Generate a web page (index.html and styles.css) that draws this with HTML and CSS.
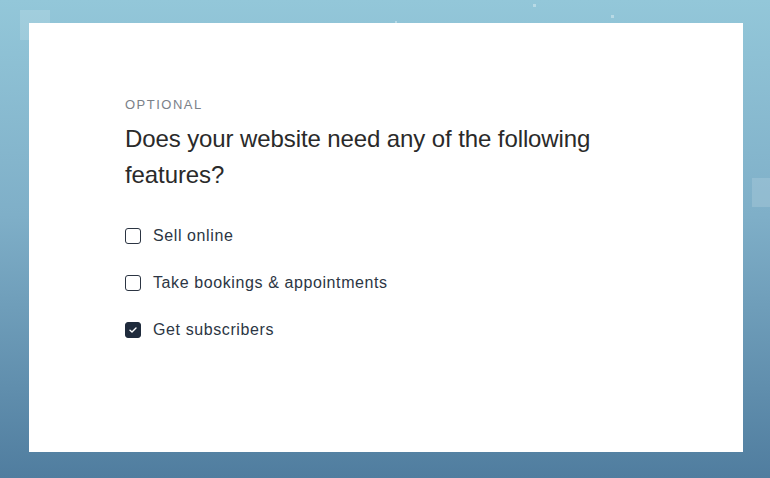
FILE: index.html
```html
<!DOCTYPE html>
<html lang="en">
<head>
  <meta charset="UTF-8" />
  <meta name="viewport" content="width=device-width, initial-scale=1.0"/>
  <title>Website features</title>
  <link rel="stylesheet" href="styles.css">
</head>
<body>
  <div class="backdrop">
    <span class="tile tile-left"></span>
    <span class="tile tile-right"></span>
    <span class="dot dot-a"></span>
    <span class="dot dot-b"></span>
    <span class="dot dot-c"></span>

    <div class="card">
      <p class="eyebrow">OPTIONAL</p>
      <h2 class="question">Does your website need any of the following features?</h2>

      <ul class="options">
        <li class="option">
          <span class="box"></span>
          <span>Sell online</span>
        </li>
        <li class="option">
          <span class="box"></span>
          <span>Take bookings &amp; appointments</span>
        </li>
        <li class="option">
          <span class="box checked">
            <svg width="8" height="6" viewBox="0 0 8 6"><path d="M1 3.2 L3 5 L7 1" fill="none" stroke="#fff" stroke-width="1.4" stroke-linecap="round" stroke-linejoin="round"/></svg>
          </span>
          <span>Get subscribers</span>
        </li>
      </ul>
    </div>
  </div>
</body>
</html>
```

FILE: styles.css
```css
html, body {
  margin: 0;
  height: 100%;
}
body {
  font-family: "Liberation Sans", Arial, sans-serif;
  background: linear-gradient(to bottom, #93c7d9 0%, #7fafc8 45%, #507d9f 100%);
}
.backdrop {
  position: relative;
  height: 100%;
  padding: 23px 27px 26px 29px;
  box-sizing: border-box;
}
.tile {
  position: absolute;
  background: rgba(255, 255, 255, 0.14);
}
.tile-left {
  left: 20px;
  top: 10px;
  width: 30px;
  height: 30px;
}
.tile-right {
  left: 752px;
  top: 178px;
  width: 30px;
  height: 29px;
}
.dot {
  position: absolute;
  width: 3px;
  height: 3px;
  background: rgba(255, 255, 255, 0.35);
}
.dot-a { left: 533px; top: 4px; }
.dot-b { left: 611px; top: 15px; }
.dot-c { left: 395px; top: 21px; width: 2px; height: 2px; }

.card {
  position: relative;
  background: #fff;
  height: 429px;
  box-sizing: border-box;
  padding: 74px 96px 0;
}
.eyebrow {
  margin: 0;
  font-size: 13px;
  line-height: 16px;
  letter-spacing: 1.5px;
  color: #7b8189;
}
.question {
  margin: 8px 0 0;
  font-size: 24px;
  font-weight: normal;
  line-height: 36px;
  letter-spacing: -0.1px;
  color: #2a2a2a;
  max-width: 500px;
}
.options {
  list-style: none;
  margin: 19px 0 0;
  padding: 0;
}
.option {
  display: flex;
  align-items: center;
  gap: 12px;
  height: 47px;
  font-size: 16px;
  letter-spacing: 0.6px;
  color: #2c3644;
}
.box {
  width: 16px;
  height: 16px;
  box-sizing: border-box;
  border: 1.5px solid #2b3442;
  border-radius: 3px;
  display: flex;
  align-items: center;
  justify-content: center;
  flex-shrink: 0;
}
.box.checked {
  background: #1f2b3c;
  border-color: #1f2b3c;
}
```
